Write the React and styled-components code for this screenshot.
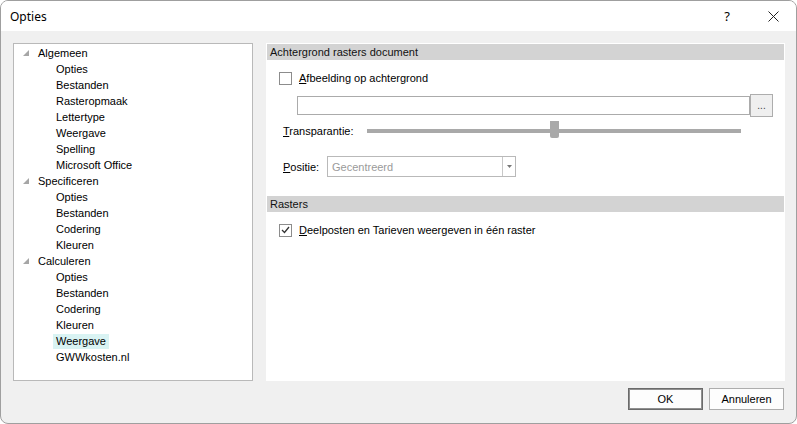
import React from 'react'
import styled, { createGlobalStyle } from 'styled-components'

const GlobalStyle = createGlobalStyle`
  html, body {
    margin: 0;
    padding: 0;
    background: #ffffff;
  }
  * { box-sizing: border-box; }
`

const Window = styled.div`
  width: 797px;
  height: 424px;
  border: 1px solid #9f9f9f;
  border-radius: 8px;
  overflow: hidden;
  background: #f0f0f0;
  display: flex;
  flex-direction: column;
  font-family: "Liberation Sans", Arial, sans-serif;
  font-size: 11px;
  color: #000;
`

const TitleBar = styled.div`
  height: 30px;
  background: #ffffff;
  display: flex;
  align-items: center;
  padding-left: 9px;
  font-family: "Noto Sans", "Open Sans", sans-serif;
  font-size: 12px;
`

const Title = styled.div`
  flex: 1;
`

const TitleButton = styled.div`
  width: 46px;
  height: 30px;
  display: flex;
  align-items: center;
  justify-content: center;
  font-size: 13px;
`

const Body = styled.div`
  display: flex;
  gap: 13px;
  padding: 12px 11px 0 12px;
`

const TreePanel = styled.div`
  width: 240px;
  height: 338px;
  background: #fff;
  border: 1px solid #b9b9b9;
  padding-top: 1px;
`

const TreeRow = styled.div`
  height: 16px;
  display: flex;
  align-items: center;
  padding-left: ${p => (p.$child ? 39 : 8)}px;
`

const Expander = styled.span`
  width: 13px;
  display: flex;
  align-items: center;
  padding-left: 1px;
`

const TreeLabel = styled.span`
  padding: 0 3px;
  line-height: 15px;
  background: ${p => (p.$selected ? '#d9f3f3' : 'transparent')};
`

const OptionsPanel = styled.div`
  flex: 1;
  height: 338px;
  background: #fff;
  padding: 1px;
`

const SectionHeader = styled.div`
  height: 16px;
  background: #d3d3d3;
  padding-left: 3px;
  display: flex;
  align-items: center;
  color: #111;
`

const Content = styled.div`
  padding: ${p => p.$pad || '0'};
`

const CheckRow = styled.label`
  display: flex;
  align-items: center;
  gap: 7px;
  padding-left: 12px;
  height: 14px;
`

const CheckBox = styled.span`
  width: 13px;
  height: 13px;
  border: 1px solid #8c8c8c;
  background: #fff;
  display: flex;
  align-items: center;
  justify-content: center;
`

const Key = styled.span`
  text-decoration: underline;
`

const FileRow = styled.div`
  display: flex;
  align-items: center;
  margin: 9px 0 0 30px;
  height: 23px;
`

const TextInput = styled.div`
  width: 453px;
  height: 19px;
  border: 1px solid #ababab;
  background: #fff;
`

const BrowseButton = styled.div`
  width: 23px;
  height: 23px;
  border: 1px solid #adadad;
  background: #efefef;
  display: flex;
  align-items: flex-end;
  justify-content: center;
  padding-bottom: 5px;
  font-size: 10px;
  line-height: 10px;
  color: #444;
`

const FieldRow = styled.div`
  display: flex;
  align-items: center;
  padding-left: ${p => p.$left || 16}px;
  height: ${p => p.$h || 18}px;
  margin-top: ${p => p.$mt || 0}px;
`

const FieldLabel = styled.span`
  width: ${p => p.$w}px;
`

const SliderTrack = styled.div`
  position: relative;
  width: 374px;
  height: 4px;
  background: #a9a9a9;
`

const SliderThumb = styled.div`
  position: absolute;
  left: 183px;
  top: -8px;
  width: 9px;
  height: 17px;
  background: #a9a9a9;
  border-radius: 0 0 2px 2px;
`

const Combo = styled.div`
  width: 189px;
  height: 21px;
  border: 1px solid #b9b9b9;
  background: #fff;
  display: flex;
  align-items: center;
  color: #9a9a9a;
`

const ComboText = styled.span`
  flex: 1;
  padding-left: 4px;
`

const ComboArrow = styled.span`
  width: 13px;
  height: 19px;
  border-left: 1px solid #c8c8c8;
  display: flex;
  align-items: center;
  justify-content: center;
`

const Footer = styled.div`
  display: flex;
  justify-content: flex-end;
  gap: 6px;
  padding: 7px 12px 0 0;
`

const Button = styled.div`
  width: ${p => p.$w || 75}px;
  height: 22px;
  display: flex;
  align-items: center;
  justify-content: center;
  background: #fdfdfd;
  border: 1px solid ${p => (p.$default ? '#6a6a6a' : '#adadad')};
  box-shadow: ${p => (p.$default ? 'inset 0 0 0 1px #8f8f8f' : 'none')};
`

const tree = [
  { label: 'Algemeen', children: ['Opties', 'Bestanden', 'Rasteropmaak', 'Lettertype', 'Weergave', 'Spelling', 'Microsoft Office'] },
  { label: 'Specificeren', children: ['Opties', 'Bestanden', 'Codering', 'Kleuren'] },
  { label: 'Calculeren', children: ['Opties', 'Bestanden', 'Codering', 'Kleuren', 'Weergave', 'GWWkosten.nl'] },
]

function ExpandedGlyph() {
  return (
    <svg width="7" height="7" viewBox="0 0 7 7">
      <polygon points="6,0 6,6 0,6" fill="#a6a6a6" />
    </svg>
  )
}

function Tree() {
  return (
    <TreePanel>
      {tree.map((group, gi) => (
        <React.Fragment key={group.label}>
          <TreeRow>
            <Expander><ExpandedGlyph /></Expander>
            <TreeLabel>{group.label}</TreeLabel>
          </TreeRow>
          {group.children.map((c, ci) => (
            <TreeRow $child key={c + ci}>
              <TreeLabel $selected={gi === 2 && c === 'Weergave'}>{c}</TreeLabel>
            </TreeRow>
          ))}
        </React.Fragment>
      ))}
    </TreePanel>
  )
}

function Check({ checked }) {
  return (
    <CheckBox>
      {checked && (
        <svg width="9" height="8" viewBox="0 0 9 8">
          <path d="M1 4 L3.5 6.5 L8 1" fill="none" stroke="#333" strokeWidth="1.3" />
        </svg>
      )}
    </CheckBox>
  )
}

export default function App() {
  return (
    <>
      <GlobalStyle />
      <Window>
        <TitleBar>
          <Title>Opties</Title>
          <TitleButton>?</TitleButton>
          <TitleButton>
            <svg width="11" height="11" viewBox="0 0 11 11">
              <path d="M0.5 0.5 L10.5 10.5 M10.5 0.5 L0.5 10.5" stroke="#222" strokeWidth="1" />
            </svg>
          </TitleButton>
        </TitleBar>
        <Body>
          <Tree />
          <OptionsPanel>
            <SectionHeader>Achtergrond rasters document</SectionHeader>
            <Content $pad="11px 0 0 0">
              <CheckRow>
                <Check />
                <span><Key>A</Key>fbeelding op achtergrond</span>
              </CheckRow>
              <FileRow>
                <TextInput />
                <BrowseButton>...</BrowseButton>
              </FileRow>
              <FieldRow $mt={5} $h={18}>
                <FieldLabel $w={84}><Key>T</Key>ransparantie:</FieldLabel>
                <SliderTrack>
                  <SliderThumb />
                </SliderTrack>
              </FieldRow>
              <FieldRow $mt={16} $h={21}>
                <FieldLabel $w={44}><Key>P</Key>ositie:</FieldLabel>
                <Combo>
                  <ComboText>Gecentreerd</ComboText>
                  <ComboArrow>
                    <svg width="5" height="3" viewBox="0 0 5 3">
                      <polygon points="0,0 5,0 2.5,3" fill="#777" />
                    </svg>
                  </ComboArrow>
                </Combo>
              </FieldRow>
            </Content>
            <Content $pad="19px 0 0 0">
              <SectionHeader>Rasters</SectionHeader>
            </Content>
            <Content $pad="11px 0 0 0">
              <CheckRow>
                <Check checked />
                <span><Key>D</Key>eelposten en Tarieven weergeven in één raster</span>
              </CheckRow>
            </Content>
          </OptionsPanel>
        </Body>
        <Footer>
          <Button $default>OK</Button>
          <Button>Annuleren</Button>
        </Footer>
      </Window>
    </>
  )
}
